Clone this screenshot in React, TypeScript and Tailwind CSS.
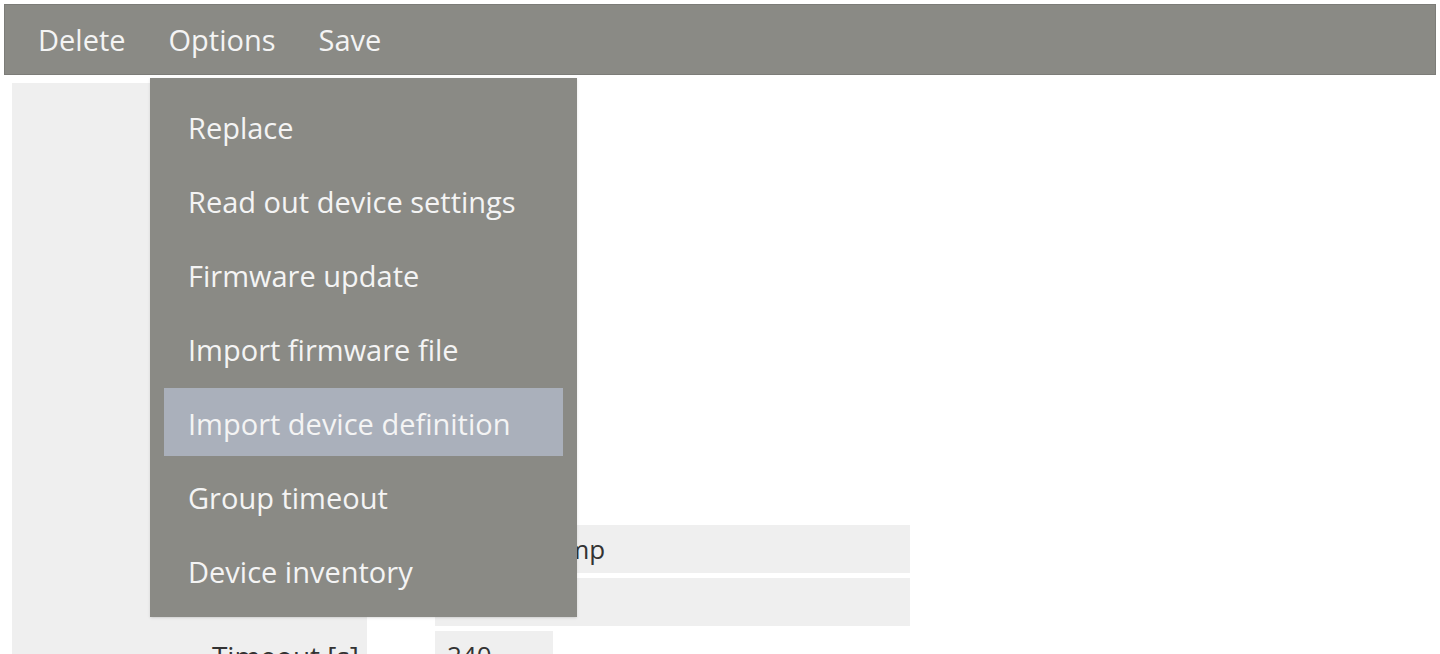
import React from "react";

const menuItems = [
  "Replace",
  "Read out device settings",
  "Firmware update",
  "Import firmware file",
  "Import device definition",
  "Group timeout",
  "Device inventory",
];

const font = { fontFamily: '"Open Sans", "Noto Sans", sans-serif' };

function FormRow({ label, value, wide }: { label: string; value: string; wide?: boolean }) {
  return (
    <div className="flex h-[53px]">
      <div className="w-[355px] bg-[#efefef] flex items-start pt-[4px] justify-end pr-[8px] text-[28px] text-[#333]">
        {label}
      </div>
      <div className="w-[68px]" />
      <div
        className={
          (wide ? "w-[475px]" : "w-[118px]") +
          " h-[48px] bg-[#efefef] flex items-center pl-[12px] text-[26px] text-[#333] overflow-hidden whitespace-nowrap"
        }
      >
        {value}
      </div>
    </div>
  );
}

export default function App() {
  return (
    <div className="relative w-[1440px] h-[654px] bg-white overflow-hidden" style={font}>
      {/* toolbar */}
      <div className="mx-[4px] mt-[4px] h-[71px] bg-[#8a8a85] border border-[#7c7c78] flex items-center pl-[33px] gap-[43px] text-[29px] text-[#f4f4f4]">
        <span>Delete</span>
        <span>Options</span>
        <span>Save</span>
      </div>

      {/* page content */}
      <div className="ml-[12px] mt-[8px] flex flex-col">
        <div className="w-[355px] h-[442px] bg-[#efefef]" />
        <FormRow label="" value="Garden lamp" wide />
        <FormRow label="" value="" wide />
        <FormRow label="Timeout [s]" value="240" />
      </div>

      {/* dropdown menu */}
      <div className="absolute left-[150px] top-[78px] w-[427px] h-[539px] bg-[#8a8a85] px-[14px] pt-[14px] flex flex-col gap-[6px] shadow-sm">
        {menuItems.map((item) => (
          <div
            key={item}
            className={
              "h-[68px] flex items-center pl-[24px] pt-[4px] text-[29px] text-[#f4f4f4] " +
              (item === "Import device definition" ? "bg-[#aab0bb]" : "")
            }
          >
            {item}
          </div>
        ))}
      </div>
    </div>
  );
}
